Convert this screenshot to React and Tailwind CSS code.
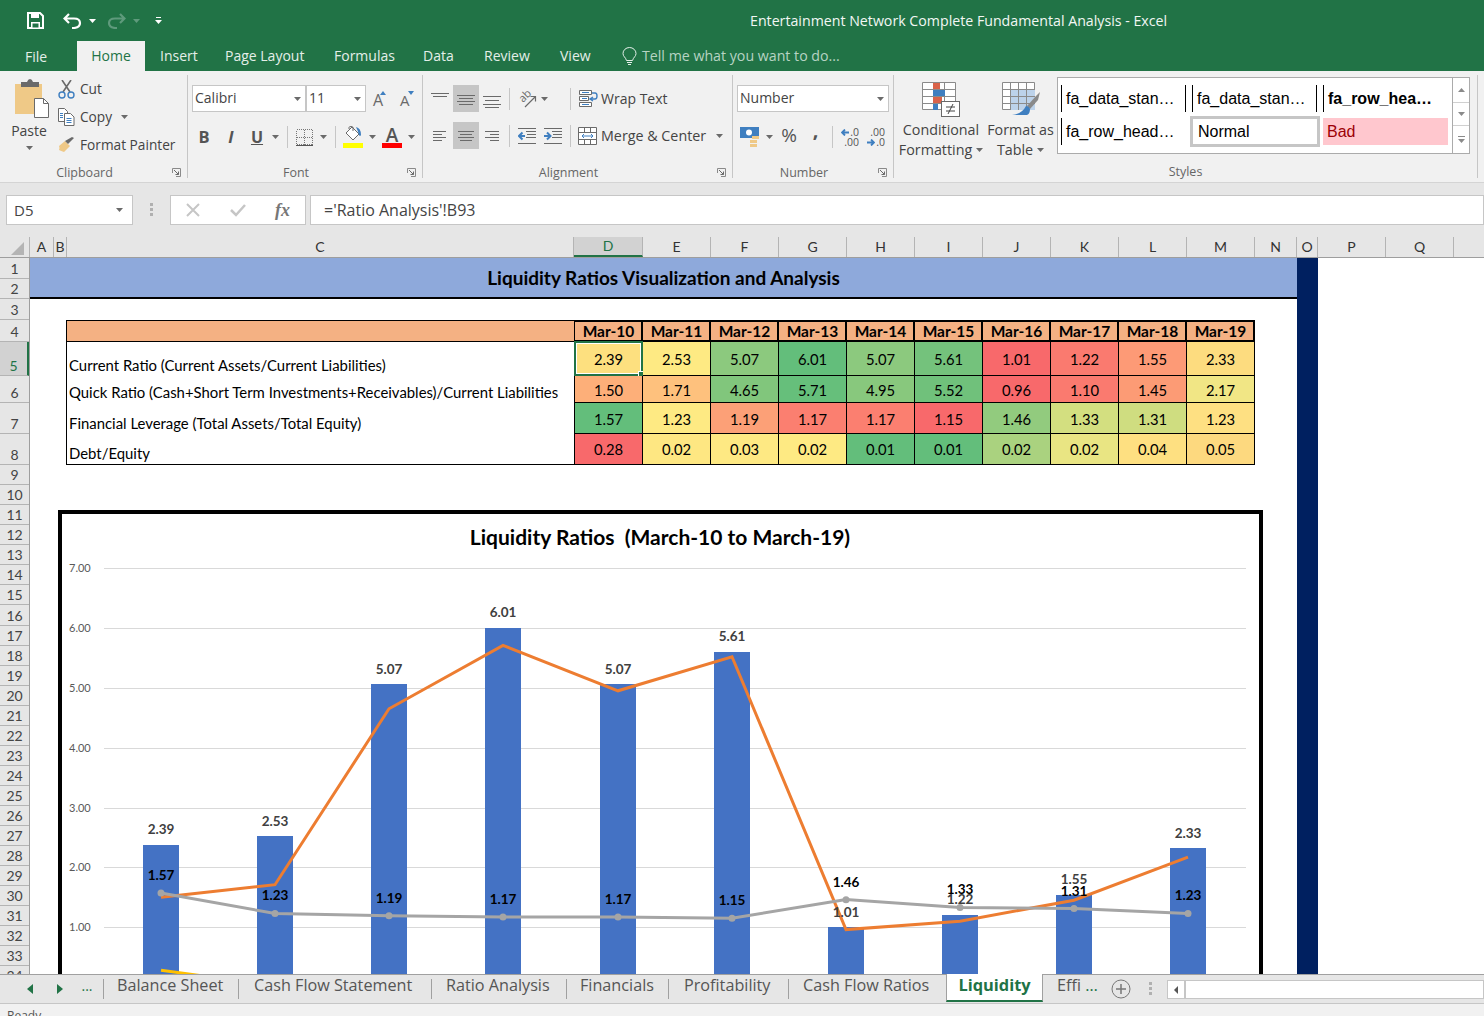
import React from "react";

const UI = "[font-family:'Open_Sans',sans-serif]";
const CAL = "[font-family:Lato,sans-serif]";

function Caret({ className = "", color = "#6a6a6a" }) {
  return (
    <svg width="7" height="4" viewBox="0 0 7 4" className={"shrink-0 " + className}>
      <path d="M0 0h7L3.5 4z" fill={color} />
    </svg>
  );
}
function Sep({ className = "" }) {
  return <div className={"w-px h-[22px] bg-[#c6c6c6] shrink-0 " + className} />;
}
function Launcher() {
  return (
    <svg width="9" height="9" viewBox="0 0 9 9" className="justify-self-end mr-[6px]">
      <path d="M.5 5V.5H8.500V8.500H4" fill="none" stroke="#8a8a8a" />
      <path d="M2 2l4.500 4.500M6.500 3.500v3h-3" fill="none" stroke="#6a6a6a" />
    </svg>
  );
}
function Group({ width, label, launcher, children }) {
  return (
    <div className={"flex flex-col shrink-0 h-[103px] border-r border-[#c6c6c6] " + width}>
      <div className="h-[90px]">{children}</div>
      {launcher ? (
        <div className="h-[13px] grid grid-cols-[1fr_auto_1fr_18px] items-center text-[12.500px] leading-[15px] text-[#666666]">
          <div />
          <div>{label}</div>
          <div />
          <Launcher />
        </div>
      ) : (
        <div className="h-[13px] flex items-center justify-center text-[12.500px] leading-[15px] text-[#666666]">{label}</div>
      )}
    </div>
  );
}
function Combo({ width, text, className = "" }) {
  return (
    <div className={"h-[27px] bg-white border border-[#c6c6c6] flex items-center justify-between pl-[2px] pr-[4px] shrink-0 " + width + " " + className}>
      <span className="text-[14px] text-[#444444] leading-[20px] pb-px">{text}</span>
      <Caret />
    </div>
  );
}
function Lines({ rows, width = 18, height = 14, extra }) {
  return (
    <svg width={width} height={height} viewBox={`0 0 ${width} ${height}`} className="shrink-0">
      {rows.map((r, i) => (
        <path key={i} d={`M${r[0]} ${r[2]}.5H${r[1]}`} stroke={r[3] || "#6a6a6a"} strokeWidth="1" />
      ))}
      {extra}
    </svg>
  );
}
const TOP = [[0, 18, 1], [2, 16, 4]];
const MID = [[0, 18, 3], [2, 16, 6], [0, 18, 9], [2, 16, 12]];
const BOT = [[0, 18, 2], [2, 16, 6], [0, 18, 10], [2, 16, 13]];
function Hl({ children, className = "" }) {
  return <div className={"w-[26px] h-[27px] bg-[#c6c6c6] flex items-center justify-center shrink-0 " + className}>{children}</div>;
}

function Clipboard() {
  return (
    <div className="flex">
      <div className="ml-[10px] w-[38px] pt-[4px] flex flex-col items-center shrink-0">
        <svg width="36" height="39" viewBox="0 0 36 39" className="ml-[3px]">
          <rect x="2" y="5" width="27" height="30" fill="#efc987" />
          <path d="M8 8V3h6q1-3 3 -3t3 3h6v5z" fill="#6a6a6a" />
          <path d="M21.500 19.500h9l5 5v14h-14z" fill="#fff" stroke="#6a6a6a" />
          <path d="M30.500 19.500v5h5" fill="none" stroke="#6a6a6a" />
        </svg>
        <div className="text-[14px] leading-[20px] mt-[3px] text-[#444444]">Paste</div>
        <Caret className="mt-[5px]" />
      </div>
      <div className="ml-[10px] flex flex-col pt-[4px] text-[13.700px] text-[#444444]">
        <div className="h-[20px] flex items-center">
          <svg width="17" height="19" viewBox="0 0 17 19" className="shrink-0">
            <path d="M4 0l8 12M13 0L5 12" stroke="#6a6a6a" strokeWidth="1.600" fill="none" />
            <circle cx="4" cy="15" r="3" fill="none" stroke="#3f7fc0" strokeWidth="1.400" />
            <circle cx="13" cy="15" r="3" fill="none" stroke="#3f7fc0" strokeWidth="1.400" />
          </svg>
          <span className="ml-[5px]">Cut</span>
        </div>
        <div className="h-[20px] mt-[8px] flex items-center">
          <svg width="17" height="18" viewBox="0 0 17 18" className="shrink-0">
            <path d="M.5 .5h6l3 3v10H.500z" fill="#fff" stroke="#6a6a6a" />
            <path d="M6.500 5.500h6l3.500 3.500v8.500H6.500z" fill="#fff" stroke="#6a6a6a" />
            <path d="M8.500 10.500h5M8.500 12.500h5M8.500 14.500h5" stroke="#3f7fc0" />
            <path d="M2 5.500h3M2 7.500h3M2 9.500h3" stroke="#3f7fc0" />
          </svg>
          <span className="ml-[5px]">Copy</span>
          <Caret className="ml-[9px]" />
        </div>
        <div className="h-[20px] mt-[8px] flex items-center">
          <svg width="17" height="16" viewBox="0 0 17 16" className="shrink-0">
            <path d="M1 9l6-5 5 5-6 6q-3-1-5-2 1-2 0-4z" fill="#efc987" />
            <path d="M7 4l3 3 6-6-2-1z" fill="#6a6a6a" />
          </svg>
          <span className="ml-[5px]">Format Painter</span>
        </div>
      </div>
    </div>
  );
}

function Font() {
  return (
    <div className="pt-[10px] text-[#555555]">
      <div className="flex items-center">
        <Combo width="w-[114px]" text="Calibri" className="ml-[4px]" />
        <Combo width="w-[60px]" text="11" />
        <div className="ml-[7px] w-[16px] h-[22px] flex shrink-0">
          <span className="text-[16px] leading-[24px] text-[#6a6a6a]">A</span>
          <svg width="6" height="4" viewBox="0 0 6 4" className="-ml-[3px] mt-[3px] shrink-0"><path d="M0 4l3-4 3 4z" fill="#3f7fc0" /></svg>
        </div>
        <div className="ml-[11px] w-[16px] h-[22px] flex shrink-0">
          <span className="text-[15px] leading-[24px] text-[#6a6a6a]">A</span>
          <svg width="6" height="4" viewBox="0 0 6 4" className="-ml-[2px] mt-[3px] shrink-0"><path d="M0 0l3 4 3-4z" fill="#3f7fc0" /></svg>
        </div>
      </div>
      <div className="flex items-center mt-[13px] h-[24px]">
        <span className="ml-[8px] w-[16px] text-center font-bold text-[16.500px] leading-[24px]">B</span>
        <span className="ml-[11px] w-[16px] text-center font-bold italic text-[16.500px] leading-[24px]">I</span>
        <span className="ml-[10px] w-[16px] text-center font-bold text-[16px] leading-[24px] underline">U</span>
        <Caret className="ml-[7px]" />
        <Sep className="ml-[8px]" />
        <svg width="17" height="17" viewBox="0 0 17 17" className="ml-[8px] shrink-0" shapeRendering="crispEdges">
          <path d="M.5 .5h16v15H.5zM8.500 .5v15M.5 8h16" fill="none" stroke="#777777" strokeDasharray="1 1" />
          <path d="M0 16.500h17" stroke="#555" />
        </svg>
        <Caret className="ml-[7px]" />
        <Sep className="ml-[8px]" />
        <div className="ml-[7px] w-[20px] flex flex-col items-center shrink-0">
          <svg width="20" height="17" viewBox="0 0 20 17">
            <path d="M9 1l7 7-6 6-7-7z" fill="#fff" stroke="#6a6a6a" />
            <path d="M6 3V1.500a2 1 0 0 1 4 0V5" fill="none" stroke="#6a6a6a" />
            <path d="M13 1q5 1 5 8-1 2-2 0-1-4-3-8z" fill="#3f7fc0" />
          </svg>
          <div className="w-[20px] h-[5px] bg-[#ffff00]" />
        </div>
        <Caret className="ml-[6px]" />
        <div className="ml-[6px] w-[20px] flex flex-col items-center shrink-0">
          <div className="h-[17px] leading-[18px] text-[19px] font-semibold text-[#555555]">A</div>
          <div className="w-[20px] h-[5px] bg-[#ff0000]" />
        </div>
        <Caret className="ml-[6px]" />
      </div>
    </div>
  );
}

function Alignment() {
  return (
    <div className="pt-[10px]">
      <div className="flex items-center h-[27px] text-[14px] text-[#444444]">
        <div className="ml-[8px] w-[18px] -mt-[8px] shrink-0"><Lines rows={TOP} height={6} /></div>
        <Hl className="ml-[4px]"><Lines rows={MID} height={13} /></Hl>
        <div className="ml-[4px] w-[18px] mt-[4px] shrink-0"><Lines rows={BOT} /></div>
        <Sep className="ml-[8px]" />
        <svg width="19" height="18" viewBox="0 0 19 18" className="ml-[8px] shrink-0 overflow-visible">
          <text x="5" y="13" fontSize="11" fill="#6a6a6a" fontFamily="'Open Sans'" transform="rotate(-45 5 13)">ab</text>
          <path d="M7 17L17 7M12.500 6.500h5v5" fill="none" stroke="#6a6a6a" strokeWidth="1.200" />
        </svg>
        <Caret className="ml-[4px]" />
        <Sep className="ml-[22px]" />
        <svg width="19" height="18" viewBox="0 0 19 18" className="ml-[8px] shrink-0">
          <path d="M.5 .5h12v4H.5zM.5 6.500h9v4h-9zM.5 12.500h12v4h-12z" fill="#fff" stroke="#6a6a6a" />
          <path d="M3 2.500h7M3 8.500h5M3 14.500h7" stroke="#3f7fc0" />
          <path d="M13 3h3q2 0 2 3t-2 3h-4M14 7l-3 2 3 2" fill="none" stroke="#3f7fc0" strokeWidth="1.400" />
        </svg>
        <span className="ml-[3px]">Wrap Text</span>
      </div>
      <div className="flex items-center h-[27px] mt-[10px] text-[14.300px] text-[#444444]">
        <div className="ml-[10px] w-[13px] shrink-0"><Lines width={13} height={11} rows={[[0, 13, 1], [0, 9, 4], [0, 13, 7], [0, 9, 10]]} /></div>
        <Hl className="ml-[7px]"><Lines rows={[[1, 17, 1], [3, 15, 4], [1, 17, 7], [3, 15, 10]]} height={11} /></Hl>
        <div className="ml-[6px] w-[14px] shrink-0"><Lines width={14} height={11} rows={[[0, 14, 1], [5, 14, 4], [0, 14, 7], [5, 14, 10]]} /></div>
        <Sep className="ml-[10px]" />
        <svg width="18" height="16" viewBox="0 0 18 16" className="ml-[8px] shrink-0">
          <path d="M0 .5h18M8 3.500h10M9 6.500h9M8 9.500h10M0 15.500h18" stroke="#6a6a6a" />
          <path d="M7 8H2M4.500 4.500L1 8l3.500 3.500" fill="none" stroke="#3f7fc0" strokeWidth="2" />
        </svg>
        <svg width="18" height="16" viewBox="0 0 18 16" className="ml-[8px] shrink-0">
          <path d="M0 .5h18M8 3.500h10M9 6.500h9M8 9.500h10M0 15.500h18" stroke="#6a6a6a" />
          <path d="M0 8h5.500M3 4.500L6.500 8 3 11.500" fill="none" stroke="#3f7fc0" strokeWidth="2" />
        </svg>
        <Sep className="ml-[8px]" />
        <svg width="19" height="18" viewBox="0 0 19 18" className="ml-[7px] shrink-0">
          <path d="M.5 .5h18v17H.5zM0 5.500h19M0 12.500h19M6.500 0v5M12.500 0v5M6.500 13v5M12.500 13v5" fill="#fff" stroke="#6a6a6a" />
          <path d="M4 9h11M6 7L4 9l2 2M13 7l2 2-2 2" fill="none" stroke="#3f7fc0" />
        </svg>
        <span className="ml-[4px]">Merge &amp; Center</span>
        <Caret className="ml-[10px]" />
      </div>
    </div>
  );
}

function NumberGroup() {
  const left = (
    <svg width="8" height="7" viewBox="0 0 8 7" className="shrink-0 mr-px"><path d="M8 3.500H2M4 .5l-3 3 3 3" fill="none" stroke="#3f7fc0" strokeWidth="1.800" /></svg>
  );
  const right = (
    <svg width="8" height="7" viewBox="0 0 8 7" className="shrink-0 mr-px"><path d="M0 3.500h6M4 .5l3 3-3 3" fill="none" stroke="#3f7fc0" strokeWidth="1.800" /></svg>
  );
  return (
    <div className="pt-[10px] text-[#555555]">
      <Combo width="w-[152px]" text="Number" className="ml-[4px]" />
      <div className="flex items-center mt-[13px] h-[24px]">
        <svg width="20" height="20" viewBox="0 0 20 20" className="ml-[7px] shrink-0">
          <rect x="0" y="0" width="19" height="11" fill="#3f7fc0" />
          <circle cx="9" cy="5.500" r="3" fill="#fff" />
          <path d="M12 9h7v3h-7zM10 13h7v3h-7zM10 17h7v3h-7z" fill="#efc987" />
        </svg>
        <Caret className="ml-[6px]" />
        <span className="ml-[7px] w-[18px] h-[24px] text-[19px] text-center leading-[20px]">%</span>
        <span className="ml-[14px] w-[7px] h-[24px] text-[20px] font-bold text-center leading-[10px]">,</span>
        <Sep className="ml-[13px]" />
        <div className="ml-[9px] w-[17px] flex flex-col shrink-0 text-[10.500px] leading-[10px] text-right">
          <div className="flex justify-end items-center">{left}.0</div>
          <div>.00</div>
        </div>
        <div className="ml-[9px] w-[17px] flex flex-col shrink-0 text-[10.500px] leading-[10px] text-right">
          <div>.00</div>
          <div className="flex justify-end items-center">{right}.0</div>
        </div>
      </div>
    </div>
  );
}

function StyleCell({ children, className = "" }) {
  return <div className={"w-[125px] h-[27px] flex items-center pl-[4px] text-[16px] text-black whitespace-nowrap " + className}>{children}</div>;
}

function Styles() {
  return (
    <div className="flex text-[14.300px] leading-[20px] text-[#444444]">
      <div className="w-[90px] ml-[2px] flex flex-col items-center shrink-0 pt-[7px]">
        <svg width="38" height="35" viewBox="0 0 38 35">
          <path d="M.5 .5h33v27H.5zM11.500 0v28M22.500 0v28M0 7.500h34M0 14.500h34M0 21.500h34" fill="#fff" stroke="#8a8a8a" />
          <rect x="11" y="1" width="7" height="6" fill="#d9634a" />
          <rect x="11" y="8" width="12" height="6" fill="#3f7fc0" />
          <rect x="11" y="15" width="9" height="6" fill="#d9634a" />
          <rect x="11" y="22" width="5" height="6" fill="#3f7fc0" />
          <rect x="19.500" y="19.500" width="18" height="15" fill="#fff" stroke="#6a6a6a" />
          <path d="M24 25h9M24 29h9M31 22l-5 10" stroke="#444" fill="none" />
        </svg>
        <div className="mt-[3px]">Conditional</div>
        <div className="flex items-center">Formatting<Caret className="ml-[4px]" /></div>
      </div>
      <div className="w-[69px] flex flex-col items-center shrink-0 pt-[7px]">
        <svg width="38" height="35" viewBox="0 0 38 35">
          <path d="M.5 .5h32v27H.5zM8.500 0v28M16.500 0v28M24.500 0v28M0 7.500h33M0 14.500h33M0 21.500h33" fill="#fff" stroke="#8a8a8a" />
          <rect x="9" y="8" width="24" height="20" fill="#bcd2ea" />
          <path d="M8.500 0v28M16.500 0v28M24.500 8v20M9 14.500h24M9 21.500h24" stroke="#8a8a8a" />
          <path d="M38 10l-2 8-8 9-3-3 9-10z" fill="#8a8a8a" />
          <path d="M24 24q3 0 4 3 0 5-3 6H10q10-1 14-9z" fill="#3f7fc0" />
        </svg>
        <div className="mt-[3px]">Format as</div>
        <div className="flex items-center">Table<Caret className="ml-[4px]" /></div>
      </div>
      <div className="ml-[2px] mt-[2px] h-[77px] flex shrink-0">
        <div className="w-[396px] h-full bg-white border border-[#ababab] pl-[3px] pt-[7px] [font-family:'Liberation_Sans',sans-serif]">
          <div className="flex h-[27px]">
            <StyleCell className="border-l border-r border-black mr-[6px]">fa_data_stan…</StyleCell>
            <StyleCell className="border-l border-r border-black mr-[6px]">fa_data_stan…</StyleCell>
            <StyleCell className="border-l border-black font-bold">fa_row_hea…</StyleCell>
          </div>
          <div className="flex h-[27px] mt-[6px]">
            <StyleCell className="border-l border-black mr-[4px]">fa_row_head…</StyleCell>
            <StyleCell className="!w-[130px] !h-[31px] -mt-[2px] border-[3px] border-[#c6c6c6] mr-[3px] pl-[5px]">Normal</StyleCell>
            <StyleCell className="bg-[#ffc7ce] !text-[#9c0006]">Bad</StyleCell>
          </div>
        </div>
        <div className="w-[17px] h-full flex flex-col border-y border-r border-[#ababab] bg-white">
          <div className="h-[25px] flex items-center justify-center border-b border-[#d0d0d0]"><Caret className="rotate-180" color="#8a8a8a" /></div>
          <div className="h-[23px] flex items-center justify-center border-b border-[#d0d0d0]"><Caret color="#8a8a8a" /></div>
          <div className="flex-1 flex flex-col items-center justify-center gap-[2px]"><div className="w-[7px] h-px bg-[#8a8a8a]" /><Caret color="#8a8a8a" /></div>
        </div>
      </div>
    </div>
  );
}

function TitleBar() {
  return (
    <div className="h-[41px] bg-[#217346] flex items-center shrink-0">
      <svg width="17" height="17" viewBox="0 0 17 17" className="ml-[27px] shrink-0">
        <path d="M1 1h12l3 3v12H1z" fill="none" stroke="#fff" strokeWidth="2" />
        <path d="M4 1h8v5H4zM4 10h9v6H4z" fill="#fff" />
        <path d="M5.500 11.500h6v4h-6z" fill="#217346" />
      </svg>
      <svg width="19" height="16" viewBox="0 0 19 16" className="ml-[19px] shrink-0">
        <path d="M6 1L1.500 5.500 6 10M2 5.500h9q6 0 6 4.500t-6 5H9" fill="none" stroke="#fff" strokeWidth="2.200" />
      </svg>
      <Caret className="ml-[7px]" color="#ffffff" />
      <svg width="19" height="16" viewBox="0 0 19 16" className="ml-[11px] shrink-0">
        <path d="M13 1l4.500 4.500L13 10M17 5.500H8q-6 0-6 4.500t6 5h2" fill="none" stroke="#5f9a7c" strokeWidth="2.200" />
      </svg>
      <Caret className="ml-[7px]" color="#5f9a7c" />
      <svg width="7" height="8" viewBox="0 0 7 8" className="ml-[15px] shrink-0">
        <path d="M1 .5h5" stroke="#fff" />
        <path d="M0 3h7L3.500 7z" fill="#fff" />
      </svg>
      <div className="ml-[588px] text-[14.200px] text-[#f2f7f4] whitespace-nowrap">Entertainment Network Complete Fundamental Analysis - Excel</div>
    </div>
  );
}

function TabBar() {
  return (
    <div className="h-[30px] bg-[#217346] flex items-stretch text-[14px] text-[#e4efe9] shrink-0">
      <div className="w-[77px] pl-[25px] pt-[5px]">File</div>
      <div className="w-[68px] bg-[#f1f1f1] text-[#217346] text-center pt-[4px]">Home</div>
      <div className="w-[80px] pl-[15px] pt-[4px]">Insert</div>
      <div className="w-[109px] pt-[4px]">Page Layout</div>
      <div className="w-[89px] pt-[4px]">Formulas</div>
      <div className="w-[61px] pt-[4px]">Data</div>
      <div className="w-[76px] pt-[4px]">Review</div>
      <div className="w-[62px] pt-[4px]">View</div>
      <svg width="15" height="19" viewBox="0 0 15 19" className="shrink-0 mt-[6px]">
        <path d="M4.500 13.500C3.500 10 1 9.500 1 6.500a6.500 6 0 0 1 13 0c0 3-2.500 3.500-3.500 7zM5 15.500h5M6 17.500h3" fill="none" stroke="#e4efe9" />
      </svg>
      <div className="ml-[5px] pt-[4px] text-[14.200px] text-[#b7d3c3]">Tell me what you want to do...</div>
    </div>
  );
}

function Ribbon() {
  return (
    <div className="h-[112px] bg-[#f1f1f1] border-b border-[#d4d4d4] pt-[4px] flex shrink-0">
      <Group width="w-[188px]" label="Clipboard" launcher><Clipboard /></Group>
      <Group width="w-[235px]" label="Font" launcher><Font /></Group>
      <Group width="w-[310px]" label="Alignment" launcher><Alignment /></Group>
      <Group width="w-[161px]" label="Number" launcher><NumberGroup /></Group>
      <Group width="w-[584px]" label="Styles"><Styles /></Group>
    </div>
  );
}

function FormulaBar() {
  return (
    <div className="h-[54px] bg-[#e6e6e6] pt-[12px] flex shrink-0 text-[15px] text-[#444444]">
      <div className="ml-[6px] w-[127px] h-[30px] bg-white border border-[#c6c6c6] flex items-center justify-between pl-[7px] pr-[9px]">
        <span>D5</span><Caret />
      </div>
      <div className="ml-[17px] w-[3px] h-[13px] mt-[8px] flex flex-col justify-between">
        <div className="h-[3px] bg-[#b0b0b0]" /><div className="h-[3px] bg-[#b0b0b0]" /><div className="h-[3px] bg-[#b0b0b0]" />
      </div>
      <div className="ml-[17px] w-[136px] h-[30px] bg-white border border-[#c6c6c6] flex items-center">
        <svg width="14" height="14" viewBox="0 0 14 14" className="ml-[15px] shrink-0"><path d="M1 1l12 12M13 1L1 13" stroke="#c6c6c6" strokeWidth="2" /></svg>
        <svg width="16" height="14" viewBox="0 0 16 14" className="ml-[30px] shrink-0"><path d="M1 7l5 5L15 2" fill="none" stroke="#c6c6c6" strokeWidth="2.500" /></svg>
        <span className="ml-[29px] [font-family:'Liberation_Serif',serif] italic font-bold text-[18px] text-[#777777]">fx</span>
      </div>
      <div className="ml-[4px] flex-1 h-[30px] bg-white border border-[#c6c6c6] pl-[13px] flex items-center text-[16px]">='Ratio Analysis'!B93</div>
    </div>
  );
}

const COLS = [["A", "w-[24px]"], ["B", "w-[13px]"], ["C", "w-[507px]"], ["D", "w-[69px]"], ["E", "w-[68px]"], ["F", "w-[68px]"], ["G", "w-[68px]"], ["H", "w-[68px]"], ["I", "w-[68px]"], ["J", "w-[68px]"], ["K", "w-[68px]"], ["L", "w-[68px]"], ["M", "w-[68px]"], ["N", "w-[42px]"], ["O", "w-[21px]"], ["P", "w-[68px]"], ["Q", "w-[68px]"]];

function ColumnHeader() {
  return (
    <div className={"h-[21px] bg-[#e6e6e6] border-b border-[#9e9e9e] flex shrink-0 text-[14px] leading-[18px] text-[#333333] " + CAL}>
      <div className="w-[30px] h-[20px] border-r border-[#b4b4b4] flex items-end justify-end pr-[5px] pb-[2px] shrink-0">
        <svg width="13" height="13" viewBox="0 0 13 13"><path d="M13 0v13H0z" fill="#b4b4b4" /></svg>
      </div>
      {COLS.map(([c, w]) => (
        <div key={c} className={"h-[20px] border-r border-[#b4b4b4] flex items-center justify-center shrink-0 " + w + (c === "D" ? " bg-[#d2d2d2] text-[#217346] border-b-2 border-b-[#217346]" : " pb-px")}>{c}</div>
      ))}
    </div>
  );
}

const ROWH = { 1: "h-[21px]", 2: "h-[20px]", 3: "h-[21px]", 4: "h-[22px]", 5: "h-[34px]", 6: "h-[27px]", 7: "h-[31px]", 8: "h-[31px]", 16: "h-[21px]" };

function RowHeader() {
  const rows = [];
  for (let i = 1; i <= 34; i++) rows.push(i);
  return (
    <div className={"w-[30px] shrink-0 bg-[#e6e6e6] border-r border-[#9e9e9e] overflow-hidden text-[14px] leading-[18px] text-[#444444] " + CAL}>
      {rows.map((r) => (
        <div key={r} className={"border-b border-[#b4b4b4] flex items-end justify-center " + (ROWH[r] || "h-[20px]") + (r === 5 ? " bg-[#d2d2d2] text-[#217346] border-r-2 border-r-[#217346]" : "")}>
          {r}
        </div>
      ))}
    </div>
  );
}

const HEAD = ["Mar-10", "Mar-11", "Mar-12", "Mar-13", "Mar-14", "Mar-15", "Mar-16", "Mar-17", "Mar-18", "Mar-19"];
const ROWS = [
  { label: "Current Ratio (Current Assets/Current Liabilities)", h: "h-[34px]", vals: [["2.39", "bg-[#fde07f]"], ["2.53", "bg-[#feea83]"], ["5.07", "bg-[#8cc97e]"], ["6.01", "bg-[#63be7b]"], ["5.07", "bg-[#8cc97e]"], ["5.61", "bg-[#74c27c]"], ["1.01", "bg-[#f8696b]"], ["1.22", "bg-[#fa7a6f]"], ["1.55", "bg-[#fd9a76]"], ["2.33", "bg-[#fddc7f]"]] },
  { label: "Quick Ratio (Cash+Short Term Investments+Receivables)/Current Liabilities", h: "h-[27px]", vals: [["1.50", "bg-[#fdaf79]"], ["1.71", "bg-[#fec17d]"], ["4.65", "bg-[#81c67c]"], ["5.71", "bg-[#66bf7b]"], ["4.95", "bg-[#88c87d]"], ["5.52", "bg-[#70c17b]"], ["0.96", "bg-[#f8696b]"], ["1.10", "bg-[#fa7a6f]"], ["1.45", "bg-[#fc9b75]"], ["2.17", "bg-[#f1e685]"]] },
  { label: "Financial Leverage (Total Assets/Total Equity)", h: "h-[31px]", vals: [["1.57", "bg-[#63be7b]"], ["1.23", "bg-[#feea83]"], ["1.19", "bg-[#fca077]"], ["1.17", "bg-[#fb7f70]"], ["1.17", "bg-[#fb7f70]"], ["1.15", "bg-[#f8696b]"], ["1.46", "bg-[#92cb7e]"], ["1.33", "bg-[#d3df80]"], ["1.31", "bg-[#cfdd80]"], ["1.23", "bg-[#fee082]"]] },
  { label: "Debt/Equity", h: "h-[30px]", vals: [["0.28", "bg-[#f8696b]"], ["0.02", "bg-[#fee782]"], ["0.03", "bg-[#fee983]"], ["0.02", "bg-[#feea83]"], ["0.01", "bg-[#63be7b]"], ["0.01", "bg-[#63be7b]"], ["0.02", "bg-[#aad27f]"], ["0.02", "bg-[#e9e583]"], ["0.04", "bg-[#fee081]"], ["0.05", "bg-[#fdd97f]"]] },
];

function RatioTable() {
  return (
    <div className="ml-[36px] mt-[21px] w-[1189px] shrink-0 grid grid-cols-[508px_repeat(10,68px)] border-l border-b border-black text-[14.800px] text-black leading-[20px]">
      <div className="h-[22px] bg-[#f4b183] border-t border-b border-r border-black" />
      {HEAD.map((h) => (
        <div key={h} className="h-[22px] bg-[#f4b183] border-t-2 border-b-2 border-r-2 border-black flex items-center justify-center font-bold text-[15.500px] pl-px leading-[16px] pb-px">{h}</div>
      ))}
      {ROWS.map((r, ri) => (
        <React.Fragment key={r.label}>
          <div className={"border-r border-black flex items-end pl-[2px] pb-px text-[14.900px] " + r.h}>{r.label}</div>
          {r.vals.map(([v, bg], i) => (
            <div key={i} className={"relative border-r border-black flex items-center justify-center " + r.h + " " + bg + (ri < 3 ? " border-b" : "") + (ri === 1 || ri === 2 ? " pt-px" : "")}>
              {v}
              {ri === 0 && i === 0 ? (
                <div className="absolute -left-px -top-px w-[69px] h-[35px] border-2 border-[#217346] outline outline-1 -outline-offset-3 outline-white">
                  <div className="absolute -right-[3px] -bottom-[3px] w-[6px] h-[6px] bg-[#217346] border border-white" />
                </div>
              ) : null}
            </div>
          ))}
        </React.Fragment>
      ))}
    </div>
  );
}

const XS = [161, 275, 389, 503, 618, 732, 846, 960, 1074, 1188];
const Y = (v) => 987 - 59.83 * v;
const S1 = [2.39, 2.53, 5.07, 6.01, 5.07, 5.61, 1.01, 1.22, 1.55, 2.33];
const S2 = [1.5, 1.71, 4.65, 5.71, 4.95, 5.52, 0.96, 1.1, 1.45, 2.17];
const S3 = [1.57, 1.23, 1.19, 1.17, 1.17, 1.15, 1.46, 1.33, 1.31, 1.23];
const S4 = [0.28, 0.02, 0.03, 0.02, 0.01, 0.01, 0.02, 0.02, 0.04, 0.05];
const pts = (s) => s.map((v, i) => `${XS[i]},${Y(v).toFixed(1)}`).join(" ");

function Chart() {
  return (
    <div className="ml-[28px] mt-[45px] w-[1205px] h-[480px] shrink-0 border-[4px] border-black bg-white overflow-hidden">
      <svg width="1197" height="472" viewBox="62 514 1197 472" className={"block " + CAL}>
        <text x="660" y="545" textAnchor="middle" fontSize="21" fontWeight="700" fill="#000" fontFamily="Lato" xmlSpace="preserve">Liquidity Ratios  (March-10 to March-19)</text>
        {[1, 2, 3, 4, 5, 6, 7].map((n) => (
          <g key={n}>
            <path d={`M104 ${Math.round(Y(n)) + 0.5}H1246`} stroke="#d9d9d9" />
            <text x="69" y={Y(n) + 4} fontSize="11" fill="#595959" fontFamily="Lato">{n}.00</text>
          </g>
        ))}
        {XS.map((x, i) => (
          <rect key={x} x={x - 18} y={Math.ceil(Y(S1[i]))} width="36" height={987 - Math.ceil(Y(S1[i]))} fill="#4472c4" />
        ))}
        <polyline points={pts(S4)} fill="none" stroke="#ffc000" strokeWidth="3" />
        <polyline points={pts(S2)} fill="none" stroke="#ed7d31" strokeWidth="3" />
        <polyline points={pts(S3)} fill="none" stroke="#a5a5a5" strokeWidth="3" />
        {XS.map((x, i) => <circle key={x} cx={x} cy={Y(S3[i])} r="3.500" fill="#a5a5a5" />)}
        {S1.map((v, i) => (
          <text key={i} x={XS[i]} y={Y(v) - 10} textAnchor="middle" fontSize="13.500" fontWeight="700" fill="#404040" fontFamily="Lato">{v.toFixed(2)}</text>
        ))}
        {S3.map((v, i) => (
          <text key={i} x={XS[i]} y={Y(v) - 13} textAnchor="middle" fontSize="13.500" fontWeight="700" fill="#000" fontFamily="Lato">{v.toFixed(2)}</text>
        ))}
      </svg>
    </div>
  );
}

function Sheet() {
  return (
    <div className="h-[716px] flex shrink-0 bg-white overflow-hidden">
      <RowHeader />
      <div className={"w-[1267px] shrink-0 flex flex-col overflow-hidden " + CAL}>
        <div className="h-[41px] bg-[#8ea9db] border-b-2 border-black flex items-center justify-center font-bold text-[19px] pt-px text-black shrink-0">
          Liquidity Ratios Visualization and Analysis
        </div>
        <RatioTable />
        <Chart />
      </div>
      <div className="w-[21px] bg-[#002060] shrink-0" />
    </div>
  );
}

const SHEETS = [["Balance Sheet", "ml-[13px]"], ["Cash Flow Statement", "ml-[15px]"], ["Ratio Analysis", "ml-[14px]"], ["Financials", "ml-[13px]"], ["Profitability", "ml-[15px]"], ["Cash Flow Ratios", "ml-[14px]"]];
const TABW = ["w-[135px]", "w-[193px]", "w-[135px]", "w-[102px]", "w-[120px]", "w-[157px]"];

function SheetTabs() {
  return (
    <div className={"h-[30px] bg-[#e6e6e6] border-t border-[#a0a0a0] border-b border-b-[#c6c6c6] flex shrink-0 text-[16.200px] text-[#555555] " + UI}>
      <svg width="6" height="10" viewBox="0 0 6 10" className="ml-[27px] mt-[9px] shrink-0"><path d="M6 0v10L0 5z" fill="#217346" /></svg>
      <svg width="6" height="10" viewBox="0 0 6 10" className="ml-[24px] mt-[9px] shrink-0"><path d="M0 0v10l6-5z" fill="#217346" /></svg>
      <div className="w-[40px] text-[#217346] text-[14px] text-center pl-[8px]">...</div>
      <div className="w-px h-[20px] mt-[4px] bg-[#a0a0a0] shrink-0" />
      {SHEETS.map(([s, m], i) => (
        <div key={s} className={"shrink-0 flex h-[28px] leading-[21px] " + TABW[i]}>
          <span className={"whitespace-nowrap flex-1 " + m}>{s}</span>
          {i < 5 ? <div className="w-px h-[20px] mt-[4px] bg-[#a0a0a0] shrink-0" /> : null}
        </div>
      ))}
      <div className="w-[97px] -mt-px h-[28px] bg-white border-x border-[#a0a0a0] border-b-2 border-b-[#217346] text-[#217346] font-bold text-center text-[16.400px] leading-[22px] shrink-0">Liquidity</div>
      <div className="w-[70px] pl-[14px] leading-[21px] whitespace-nowrap shrink-0">Effi <span className="text-[#217346]">…</span></div>
      <svg width="20" height="20" viewBox="0 0 20 20" className="mt-[4px] -ml-[2px] shrink-0">
        <circle cx="10" cy="10" r="9" fill="none" stroke="#777" />
        <path d="M10 5v10M5 10h10" stroke="#777" strokeWidth="1.500" />
      </svg>
      <div className="ml-[18px] w-[3px] h-[13px] mt-[7px] flex flex-col justify-between shrink-0">
        <div className="h-[3px] bg-[#b0b0b0]" /><div className="h-[3px] bg-[#b0b0b0]" /><div className="h-[3px] bg-[#b0b0b0]" />
      </div>
      <div className="ml-[15px] flex-1 h-[19px] mt-[5px] bg-white border border-[#c6c6c6] flex">
        <div className="w-[18px] border-r-2 border-[#c6c6c6] flex items-center justify-center">
          <svg width="4" height="8" viewBox="0 0 4 8"><path d="M4 0v8L0 4z" fill="#555" /></svg>
        </div>
      </div>
    </div>
  );
}

export default function App() {
  return (
    <div className={"w-[1484px] h-[1016px] overflow-hidden flex flex-col bg-[#f1f1f1] " + UI}>
      <TitleBar />
      <TabBar />
      <Ribbon />
      <FormulaBar />
      <ColumnHeader />
      <Sheet />
      <SheetTabs />
      <div className="flex-1 bg-[#f1f1f1] pl-[7px] pt-[5px] text-[12px] leading-[14px] text-[#555555]">Ready</div>
    </div>
  );
}
